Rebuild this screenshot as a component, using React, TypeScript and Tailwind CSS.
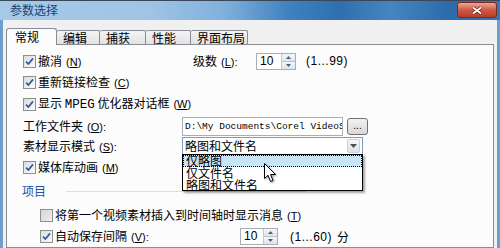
import React from "react";

// ── shared bits ─────────────────────────────────────────────────────────────

const cjk = "font-['Noto_Sans_CJK_SC','Noto_Sans',sans-serif]";
const latin = "font-['Liberation_Sans',Arial,sans-serif]";

function Key({ k, colon = false }: { k: string; colon?: boolean }) {
  return (
    <span className={`${latin} text-[11px] ml-[4px]`}>
      (<span className="underline underline-offset-1">{k}</span>){colon ? ":" : ""}
    </span>
  );
}

function Check({ checked = true }: { checked?: boolean }) {
  return (
    <span
      className={`w-[13px] h-[13px] shrink-0 border border-[#8e8f8f] flex items-center justify-center ${
        checked ? "bg-linear-to-br from-[#dcdcdc] to-[#fbfbfb]" : "bg-linear-to-br from-[#d6d6d6] to-[#eeeeee]"
      }`}
    >
      {checked && (
        <svg width="9" height="9" viewBox="0 0 9 9">
          <path d="M1 4.6 L3.4 7 L8 1.4" stroke="#3557a3" strokeWidth="1.7" fill="none" />
        </svg>
      )}
    </span>
  );
}

function Tri({ up = false }: { up?: boolean }) {
  return (
    <svg width="5" height="3" viewBox="0 0 5 3">
      <path d={up ? "M0 3 L2.5 0 L5 3 Z" : "M0 0 L5 0 L2.5 3 Z"} fill="#4b5f84" />
    </svg>
  );
}

function Spin({ value, w }: { value: string; w: string }) {
  return (
    <div className={`${w} h-[17px] border border-[#abadb3] bg-white flex`}>
      <span className={`flex-1 pl-[3px] ${latin} text-[12px] leading-[15px]`}>{value}</span>
      <div className="w-[14px] flex flex-col border-l border-[#c3c7cf]">
        <div className="flex-1 flex items-center justify-center bg-linear-to-b from-[#f4f6f9] to-[#dfe5ec] border-b border-[#b9c2cc]">
          <Tri up />
        </div>
        <div className="flex-1 flex items-center justify-center bg-linear-to-b from-[#f4f6f9] to-[#dfe5ec]">
          <Tri />
        </div>
      </div>
    </div>
  );
}

const tabs = [
  { label: "编辑", w: "w-[43px]" },
  { label: "捕获", w: "w-[46px]" },
  { label: "性能", w: "w-[45px]" },
  { label: "界面布局", w: "w-[57px]" },
];

export default function App() {
  return (
    <div className={`relative w-[500px] h-[248px] overflow-hidden bg-[#6e9ecb] ${cjk} text-[12px] text-black`}>
      {/* title bar */}
      <div className="h-[20px] flex items-start border-t border-[#3b4756] bg-[linear-gradient(90deg,#a6c9e8_0%,#9fc4e5_30%,#7fb0dc_45%,#3f80bf_58%,#2e6fae_68%,#4585c0_78%,#2b6ba9_90%,#3a77b2_100%)]">
        <span className="ml-[10px] mt-[1px] leading-[16px] text-[#1f3f72]">参数选择</span>
        <div className="ml-auto mr-[3px] mt-[1px] w-[40px] h-[16px] rounded-[3px] border border-[#7a2c22] bg-linear-to-b from-[#eaa698] via-[#cf5844] to-[#bf3a28] flex items-center justify-center">
          <svg width="12" height="9" viewBox="0 0 12 9">
            <path d="M2 1.5 L10 7.5 M10 1.5 L2 7.5" stroke="#5a1f17" strokeWidth="3.4" />
            <path d="M2 1.5 L10 7.5 M10 1.5 L2 7.5" stroke="#ffffff" strokeWidth="1.8" />
          </svg>
        </div>
      </div>

      {/* dialog body */}
      <div className="mx-[3px] h-[228px] bg-[#f0f0f0] pt-[8px] pl-[3px] flex flex-col">
        {/* tabs */}
        <div className="relative z-10 flex items-end h-[17px]">
          <div className="w-[51px] h-[17px] bg-[#fcfcfc] border border-b-0 border-[#898c95] rounded-t-[3px] pl-[8px] leading-[15px]">
            常规
          </div>
          {tabs.map((t) => (
            <div
              key={t.label}
              className={`${t.w} h-[14px] mb-[1px] border-t border-r border-[#898c95] rounded-t-[2px] bg-linear-to-b from-[#f4f4f4] to-[#e2e2e2] pl-[6px] leading-[13px]`}
            >
              {t.label}
            </div>
          ))}
        </div>

        {/* tab panel */}
        <div className="-mt-px w-[488px] flex-1 bg-[#fcfcfc] border border-[#898c95] pt-[5px] pl-[16px]">
          <div className="h-[22px] flex items-center">
            <div className="w-[170px] flex items-center gap-[2px]">
              <Check />
              <span>
                撤消
                <Key k="N" />
              </span>
            </div>
            <span className="w-[63px]">
              级数
              <Key k="L" colon />
            </span>
            <Spin value="10" w="w-[40px]" />
            <span className={`ml-[10px] ${latin} text-[12px] tracking-[0.5px]`}>(1...99)</span>
          </div>

          <div className="h-[21px] flex items-center gap-[2px]">
            <Check />
            <span>
              重新链接检查
              <Key k="C" />
            </span>
          </div>

          <div className="h-[23px] flex items-center gap-[2px]">
            <Check />
            <span>
              显示 <span className="font-['Liberation_Mono',monospace] text-[12.5px]">MPEG</span> 优化器对话框
              <Key k="W" />
            </span>
          </div>

          <div className="h-[20px] flex items-center">
            <span className="w-[159px]">
              工作文件夹
              <Key k="O" colon />
            </span>
            <div className="w-[161px] h-[19px] border border-[#abadb3] bg-white overflow-hidden whitespace-nowrap pl-[2px] font-['Liberation_Mono',monospace] text-[9.5px] leading-[17px]">
              D:\My Documents\Corel VideoS
            </div>
            <div className="ml-[4px] w-[21px] h-[17px] border border-[#707070] rounded-[3px] bg-linear-to-b from-[#f2f2f2] to-[#d8d8d8] flex items-end justify-center pb-[3px]">
              <span className={`${latin} text-[10px] leading-none`}>...</span>
            </div>
          </div>

          <div className="h-[20px] flex items-center">
            <span className="w-[159px]">
              素材显示模式
              <Key k="S" colon />
            </span>
            <div className="relative w-[181px] h-[18px] border border-[#7f9db9] bg-white flex items-center">
              <span className="flex-1 pl-[2px] leading-[16px]">略图和文件名</span>
              <div className="mr-[2px] w-[13px] h-[14px] rounded-[2px] border border-[#c9d1da] bg-linear-to-b from-[#f5f7f9] to-[#dde2e8] flex items-center justify-center">
                <svg width="7" height="4" viewBox="0 0 7 4">
                  <path d="M0 0 L7 0 L3.5 4 Z" fill="#4d4d4d" />
                </svg>
              </div>

              {/* open list */}
              <div className="absolute left-[-1px] top-[16px] z-20 w-[181px] h-[37px] bg-white border border-black shadow-[2px_2px_2px_rgba(0,0,0,0.35)] flex flex-col">
                <div className="h-[12px] shrink-0 bg-[#c8e5f8] border border-dotted border-black leading-[10px] pl-[2px]">仅略图</div>
                <div className="h-[12px] shrink-0 leading-[12px] pl-[3px]">仅文件名</div>
                <div className="h-[11px] shrink-0 leading-[11px] pl-[3px]">略图和文件名</div>
              </div>
            </div>
          </div>

          <div className="h-[22px] flex items-center gap-[2px]">
            <Check />
            <span>
              媒体库动画
              <Key k="M" />
            </span>
          </div>

          <div className="h-[26px] -ml-px flex items-center">
            <span className="text-[#1f4fa6]">项目</span>
            <span className="ml-[20px] w-[240px] h-px bg-[#d5dfe5]" />
          </div>

          <div className="h-[22px] pl-[17px] flex items-center gap-[2px]">
            <Check checked={false} />
            <span>
              将第一个视频素材插入到时间轴时显示消息
              <Key k="T" />
            </span>
          </div>

          <div className="h-[21px] pl-[17px] flex items-center">
            <div className="w-[200px] flex items-center gap-[2px]">
              <Check />
              <span>
                自动保存间隔
                <Key k="V" colon />
              </span>
            </div>
            <Spin value="10" w="w-[38px]" />
            <span className={`ml-[12px] ${latin} text-[12px] tracking-[0.5px]`}>(1...60)</span>
            <span className="ml-[5px]">分</span>
          </div>
        </div>
      </div>

      {/* mouse pointer */}
      <svg
        className="absolute left-[264px] top-[163px] z-30 drop-shadow-[1px_1px_1px_rgba(0,0,0,0.4)]"
        width="13"
        height="20"
        viewBox="0 0 13 20"
      >
        <path
          d="M0.5 0.5 L0.5 15.5 L4 12.2 L6.5 18.5 L9 17.5 L6.6 11.5 L11.5 11.5 Z"
          fill="white"
          stroke="black"
          strokeWidth="1"
        />
      </svg>
    </div>
  );
}
